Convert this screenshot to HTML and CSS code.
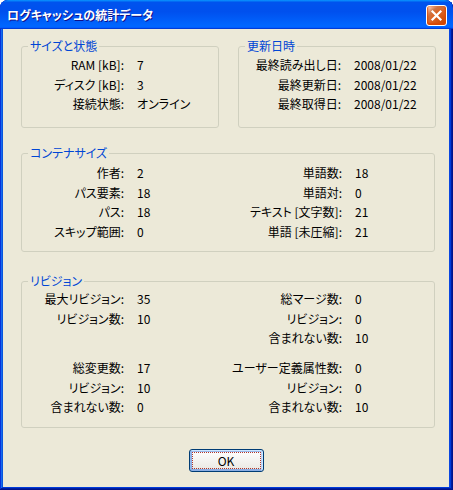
FILE: index.html
```html
<!DOCTYPE html>
<html lang="ja">
<head>
  <meta charset="UTF-8">
  <title>ログキャッシュの統計データ</title>
  <link rel="stylesheet" href="styles.css">
</head>
<body>

  <div class="window">
    <div class="titlebar">
      <span class="title">ログキャッシュの統計データ</span>
      <button class="close" aria-label="閉じる">
        <svg width="13" height="13" viewBox="0 0 13 13">
          <path d="M2.5 2.5L10.5 10.5M10.5 2.5L2.5 10.5" stroke="#fff" stroke-width="2.2" stroke-linecap="square"/>
        </svg>
      </button>
    </div>

    <div class="client">
      <div class="top-groups">
        <fieldset class="group group-small">
          <legend>サイズと状態</legend>
          <div class="stats">
            <span class="label">RAM [kB]:</span><span>7</span>
            <span class="label">ディスク [kB]:</span><span>3</span>
            <span class="label">接続状態:</span><span>オンライン</span>
          </div>
        </fieldset>

        <fieldset class="group group-small">
          <legend>更新日時</legend>
          <div class="stats">
            <span class="label">最終読み出し日:</span><span>2008/01/22</span>
            <span class="label">最終更新日:</span><span>2008/01/22</span>
            <span class="label">最終取得日:</span><span>2008/01/22</span>
          </div>
        </fieldset>
      </div>

      <fieldset class="group group-wide group-content">
        <legend>コンテナサイズ</legend>
        <div class="stats stats-wide">
          <span class="label">作者:</span><span>2</span>
          <span class="label">単語数:</span><span>18</span>
          <span class="label">パス要素:</span><span>18</span>
          <span class="label">単語対:</span><span>0</span>
          <span class="label">パス:</span><span>18</span>
          <span class="label">テキスト [文字数]:</span><span>21</span>
          <span class="label">スキップ範囲:</span><span>0</span>
          <span class="label">単語 [未圧縮]:</span><span>21</span>
        </div>
      </fieldset>

      <fieldset class="group group-wide group-revision">
        <legend>リビジョン</legend>
        <div class="stats stats-wide">
          <span class="label">最大リビジョン:</span><span>35</span>
          <span class="label">総マージ数:</span><span>0</span>
          <span class="label">リビジョン数:</span><span>10</span>
          <span class="label">リビジョン:</span><span>0</span>
          <span></span><span></span>
          <span class="label">含まれない数:</span><span>10</span>
          <div class="spacer"></div>
          <span class="label">総変更数:</span><span>17</span>
          <span class="label">ユーザー定義属性数:</span><span>0</span>
          <span class="label">リビジョン:</span><span>10</span>
          <span class="label">リビジョン:</span><span>0</span>
          <span class="label">含まれない数:</span><span>0</span>
          <span class="label">含まれない数:</span><span>10</span>
        </div>
      </fieldset>

      <div class="buttons">
        <button class="ok">OK</button>
      </div>
    </div>
  </div>

</body>
</html>
```

FILE: styles.css
```css
body {
  margin: 0;
  background-color: #fff;
  font-family: "Noto Sans CJK JP", sans-serif;
  font-size: 12px;
  color: #000;
}

/* Window frame */
.window {
  width: 453px;
  height: 490px;
  box-sizing: border-box;
  display: flex;
  flex-direction: column;
  background-color: #0831d9;
  border-radius: 8px 8px 0 0;
  overflow: hidden;
  box-shadow: inset -1px -1px #00138c, inset 1px 1px #0831d9,
    inset -2px -2px #001ea0, inset 2px 2px #166aee,
    inset -3px -3px #003bda, inset 3px 3px #0855dd,
    inset -4px 0 #0a46e0;
}

.titlebar {
  flex: none;
  height: 29px;
  box-sizing: border-box;
  display: flex;
  align-items: center;
  justify-content: space-between;
  padding: 0 6px 0 7px;
  border-radius: 8px 8px 0 0;
  background: linear-gradient(180deg, #0997ff, #0053ee 8%, #0050ee 40%, #06f 88%, #06f 93%, #005bff 95%, #003dd7 96%, #003dd7);
}

.title {
  color: #fff;
  font-weight: bold;
  font-size: 12px;
  font-feature-settings: "palt";
  text-shadow: 1px 1px #0f1089;
}

.close {
  width: 21px;
  height: 21px;
  margin-top: 2px;
  padding: 0;
  display: flex;
  align-items: center;
  justify-content: center;
  border: 1px solid #fff;
  border-radius: 3px;
  background: radial-gradient(circle at 90% 90%, #cc4600 0%, #dc6527 55%, #cd7546 70%, #ffccb2 90%, #fff 100%);
  box-shadow: inset 0 -1px 2px 1px #da4600;
}

/* Dialog body */
.client {
  flex: 1;
  margin: 0 4px 3px 3px;
  padding: 10px 0 0 18px;
  background-color: #ece9d8;
}

.top-groups {
  display: flex;
  gap: 19px;
}

.group {
  margin: 0;
  padding: 2px 0 0;
  box-sizing: border-box;
  min-width: 0;
  border: 1px solid #d0d0bf;
  border-radius: 3px;
}

.group legend {
  margin-left: 6px;
  padding: 0 2px;
  line-height: 14px;
  color: #0046d5;
  font-feature-settings: "palt";
}

.group-small {
  width: 198px;
  height: 89px;
}

.group-wide {
  width: 414px;
}

.group-content {
  margin-top: 18px;
  height: 106px;
  padding-top: 3px;
}

.group-revision {
  margin-top: 22px;
  height: 154px;
  padding-top: 1px;
}

.stats {
  display: grid;
  grid-template-columns: 115px 1fr;
  line-height: 19.5px;
  white-space: nowrap;
  font-feature-settings: "palt";
}

.stats-wide {
  grid-template-columns: 115px 80px 138px 1fr;
}

.label {
  text-align: right;
  padding-right: 13px;
}

.spacer {
  grid-column: 1 / -1;
  height: 10.5px;
}

/* OK button */
.buttons {
  display: flex;
  justify-content: center;
  margin: 21px 0 0 -18px;
}

.ok {
  width: 75px;
  height: 23px;
  padding: 0;
  font: inherit;
  color: #000;
  border: 1px solid #003c74;
  border-radius: 3px;
  background: linear-gradient(180deg, #fff, #ecebe6 86%, #d6d0c5);
  box-shadow: inset -1px 1px #cee7ff, inset 1px 2px #98b8ea, inset -2px 2px #bcd4f6,
    inset 1px -1px #89ade4, inset 2px -2px #89ade4;
  outline: 1px dotted #b0382e;
  outline-offset: -4px;
}
```
